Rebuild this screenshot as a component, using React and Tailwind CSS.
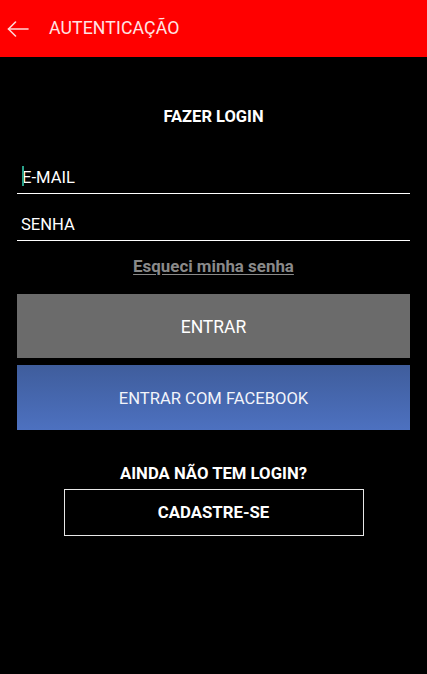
export default function App() {
  return (
    <div className="w-[427px] h-[674px] bg-black flex flex-col font-['Roboto','Liberation_Sans',sans-serif]">
      {/* header */}
      <div className="h-[57px] bg-[#ff0000] flex items-center shrink-0">
        <svg width="22" height="16" viewBox="0 0 22 16" className="ml-[7px]" fill="none" stroke="#ffd6d6" strokeWidth="1.6" strokeLinecap="round" strokeLinejoin="round">
          <path d="M21 8H1.5" />
          <path d="M8.5 1L1.5 8l7 7" />
        </svg>
        <span className="ml-[20px] text-[17.7px] text-[#ffe4e4] tracking-[0.1px]">AUTENTICAÇÃO</span>
      </div>

      <div className="px-[17px] flex flex-col">
        <h1 className="mt-[50px] text-center text-white font-bold text-[16.5px] leading-[20px]">FAZER LOGIN</h1>

        {/* inputs */}
        <div className="mt-[39px] h-[28px] pt-[3px] border-b-[1.5px] border-white flex items-start relative">
          <span className="absolute left-[5px] top-[0px] w-[1.5px] h-[20px] bg-[#2aa18a]" />
          <span className="ml-[5px] text-white text-[16.6px] leading-[17px]">E-MAIL</span>
        </div>
        <div className="mt-[19px] h-[28px] pt-[3px] border-b-[1.5px] border-white flex items-start">
          <span className="ml-[4px] text-white text-[16.6px] leading-[17px]">SENHA</span>
        </div>

        <a className="mt-[15px] self-center text-[#8a8a8a] font-bold text-[16.9px] leading-[20px] underline underline-offset-[2px]">
          Esqueci minha senha
        </a>

        <button className="mt-[18px] h-[64px] pt-[3px] bg-[#6b6b6b] text-white text-[17.5px] w-full">ENTRAR</button>
        <button className="mt-[7px] h-[65px] pt-[3px] bg-gradient-to-b from-[#3f5d9c] to-[#4d71c0] text-[#f2f4fa] text-[16.6px] w-full">
          ENTRAR COM FACEBOOK
        </button>

        <p className="mt-[35px] text-center text-white font-bold text-[16.7px] leading-[18px]">AINDA NÃO TEM LOGIN?</p>
        <button className="mt-[6px] self-center w-[300px] h-[47px] pt-[1px] border-[1.5px] border-[#e8e8e8] text-white font-bold text-[16.8px]">
          CADASTRE-SE
        </button>
      </div>
    </div>
  );
}
